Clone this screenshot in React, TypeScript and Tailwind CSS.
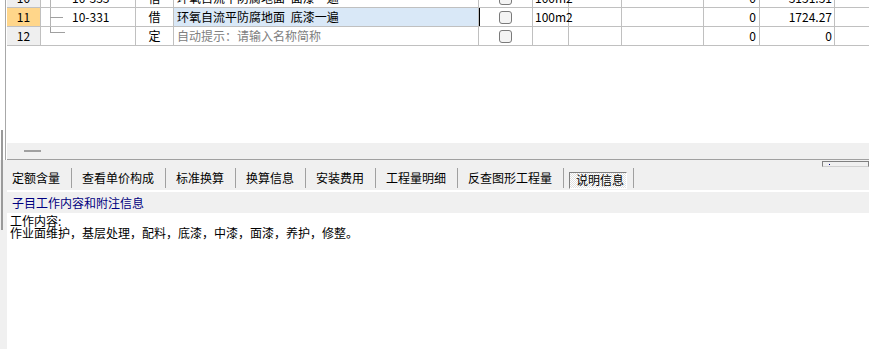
import React from "react";

type RowProps = {
  num: string;
  numBg: string;
  code: string;
  tree: "mid" | "end";
  type: string;
  name: string;
  nameClass: string;
  unit: string;
  v1: string;
  v2: string;
  cursor?: boolean;
};

function Tree({ kind }: { kind: "mid" | "end" }) {
  return (
    <svg width="22" height="18" className="shrink-0" viewBox="0 0 22 18">
      {kind === "mid" ? (
        <>
          <line x1="0.5" y1="0" x2="0.5" y2="18" stroke="#b4b4b4" strokeWidth="1" />
          <line x1="0" y1="9.5" x2="13" y2="9.5" stroke="#a0a0a0" strokeWidth="1" />
        </>
      ) : (
        <>
          <line x1="0.5" y1="0" x2="0.5" y2="6" stroke="#a0a0a0" strokeWidth="1" />
          <line x1="0" y1="5.5" x2="15" y2="5.5" stroke="#a0a0a0" strokeWidth="1" />
        </>
      )}
    </svg>
  );
}

function Row(p: RowProps) {
  return (
    <div className="flex h-[19px] border-b border-[#c0c0c0] leading-[18px]">
      <div className={`w-[34px] shrink-0 border-r border-[#c0c0c0] text-center ${p.numBg}`}>{p.num}</div>
      <div className="w-[95px] shrink-0 border-r border-[#c0c0c0] flex items-center pl-[9px]">
        <Tree kind={p.tree} />
        <span>{p.code}</span>
      </div>
      <div className="w-[38px] shrink-0 border-r border-[#c0c0c0] text-center">{p.type}</div>
      <div className={`w-[305px] shrink-0 border-r border-[#c0c0c0] pl-[3px] whitespace-pre [word-spacing:3px] ${p.nameClass}`}>{p.name}</div>
      <div className="w-[54px] shrink-0 border-r border-[#c0c0c0] relative flex items-center justify-center">
        {p.cursor && <div className="absolute left-0 top-0 bottom-0 w-[1px] bg-black" />}
        <div className="w-[13px] h-[13px] rounded-[3px] border border-[#7a7a7a] bg-[#f4f4f4]" />
      </div>
      <div className="w-[36px] shrink-0 border-r border-[#c0c0c0] pl-[2px]">{p.unit}</div>
      <div className="w-[53px] shrink-0 border-r border-[#c0c0c0]" />
      <div className="w-[82px] shrink-0 border-r border-[#c0c0c0]" />
      <div className="w-[56px] shrink-0 border-r border-[#c0c0c0] text-right pr-[3px]">{p.v1}</div>
      <div className="w-[75px] shrink-0 border-r border-[#c0c0c0] text-right pr-[2px]">{p.v2}</div>
      <div className="flex-1" />
    </div>
  );
}

const tabs = ["定额含量", "查看单价构成", "标准换算", "换算信息", "安装费用", "工程量明细", "反查图形工程量"];

export default function App() {
  return (
    <div className="relative w-[869px] h-[349px] overflow-hidden bg-white text-[12px] text-black font-['Noto_Sans_CJK_SC','Noto_Sans',sans-serif] flex flex-col">
      {/* top section */}
      <div className="flex h-[160px] shrink-0">
        <div className="w-[6px] shrink-0 border-r border-[#a8a8a8] bg-white" />
        <div className="flex-1 flex flex-col pl-[1px] bg-white">
          <div className="h-[143px] overflow-hidden">
            <div className="-mt-[11px]">
              <Row
                num="10"
                numBg="bg-[#efefef]"
                code="10-333"
                tree="mid"
                type="借"
                name="环氧自流平防腐地面 面漆一遍"
                nameClass=""
                unit="100m2"
                v1="0"
                v2="3151.51"
              />
              <Row
                num="11"
                numBg="bg-[#ffd68a]"
                code="10-331"
                tree="mid"
                type="借"
                name="环氧自流平防腐地面 底漆一遍"
                nameClass="bg-[#d9e8f7]"
                unit="100m2"
                v1="0"
                v2="1724.27"
                cursor
              />
              <Row
                num="12"
                numBg="bg-[#efefef]"
                code=""
                tree="end"
                type="定"
                name="自动提示：请输入名称简称"
                nameClass="text-[#808080]"
                unit=""
                v1="0"
                v2="0"
              />
            </div>
          </div>
          <div className="h-[17px] bg-[#f0f0f0] border-b border-[#a0a0a0] pt-[7px] pl-[17px]">
            <div className="w-[17px] h-[2px] bg-[#a0a0a0]" />
          </div>
        </div>
      </div>

      {/* tab bar */}
      <div className="relative h-[30px] shrink-0 bg-[#f0f0f0] flex items-start pt-[8px] pl-[2px]">
        {tabs.map((t) => (
          <React.Fragment key={t}>
            <div className="pl-[10px] pr-[11px] mt-[4px] leading-[12px] whitespace-nowrap">{t}</div>
            <div className="w-[1px] h-[20px] bg-[#a0a0a0]" />
          </React.Fragment>
        ))}
        <div className="ml-[5px] mt-[4px] h-[17px] border border-t-[#808080] border-l-[#808080] border-b-white border-r-white pl-[6px] pr-[2px] leading-[14px] bg-[repeating-conic-gradient(#e0e0e0_0%_25%,#ffffff_0%_50%)] bg-[length:2px_2px]">
          说明信息
        </div>
        <div className="ml-[6px] w-[1px] h-[20px] bg-[#a0a0a0]" />
        <div className="absolute right-0 top-[1px] w-[47px] h-[6px] border border-t-[#808080] border-l-[#808080] border-r-[#808080] border-b-[#d0d0d0] pl-[6px] pt-[2px]">
          <div className="w-[1px] h-[1px] bg-[#000080]" />
        </div>
      </div>

      {/* bottom panel */}
      <div className="flex-1 flex bg-[#f0f0f0]">
        <div className="w-[7px] shrink-0" />
        <div className="flex-1 flex flex-col border-t-2 border-white">
          <div className="h-[21px] shrink-0 bg-[#f0f0f0] flex items-center pl-[5px] text-[#000080] leading-[14px]">
            子目工作内容和附注信息
          </div>
          <div className="flex-1 bg-white pl-[3px] pt-[2px] leading-[12px]">
            <div>工作内容:</div>
            <div>作业面维护，基层处理，配料，底漆，中漆，面漆，养护，修整。</div>
          </div>
        </div>
      </div>

      {/* splitter mark */}
      <div className="absolute left-[1px] top-[130px] w-[2px] h-[100px] bg-[#9a9a9a]" />
    </div>
  );
}
